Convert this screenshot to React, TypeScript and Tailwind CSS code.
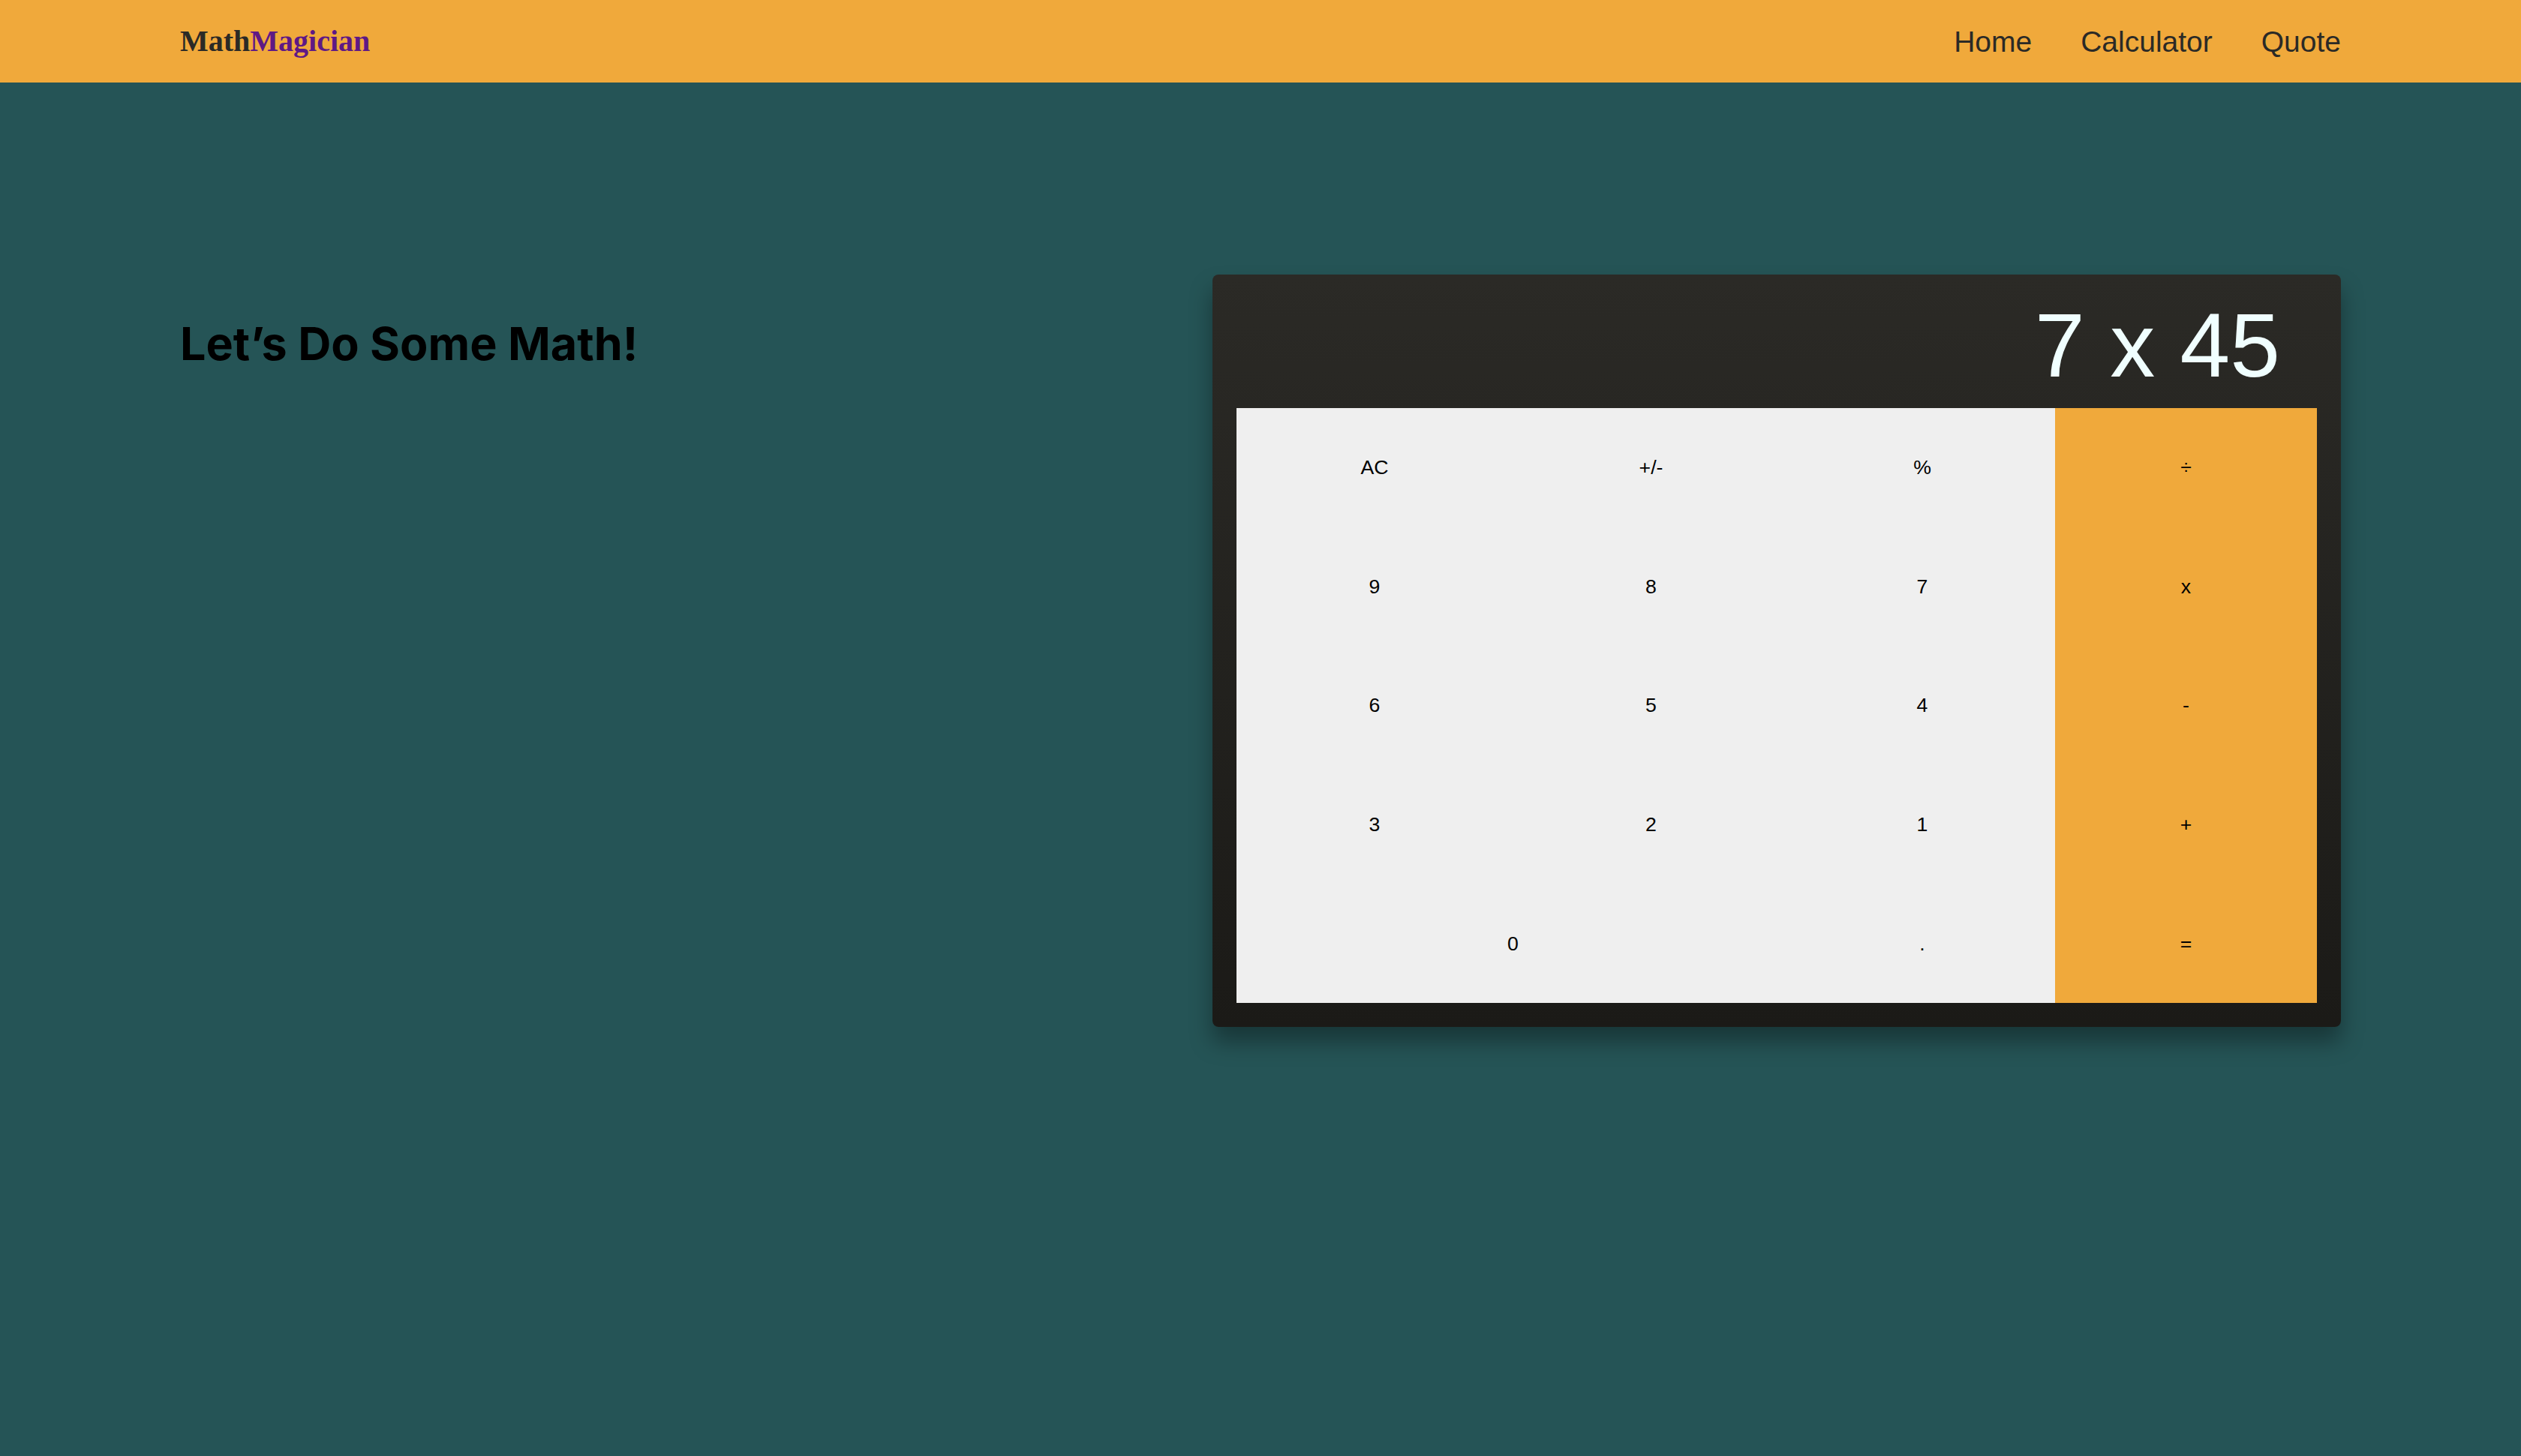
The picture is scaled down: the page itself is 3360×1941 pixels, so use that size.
import React from "react";

const keys: { label: string; orange?: boolean; span?: boolean }[] = [
  { label: "AC" }, { label: "+/-" }, { label: "%" }, { label: "÷", orange: true },
  { label: "9" }, { label: "8" }, { label: "7" }, { label: "x", orange: true },
  { label: "6" }, { label: "5" }, { label: "4" }, { label: "-", orange: true },
  { label: "3" }, { label: "2" }, { label: "1" }, { label: "+", orange: true },
  { label: "0", span: true }, { label: "." }, { label: "=", orange: true },
];

export default function App() {
  return (
    <div className="min-h-[1941px] bg-[#255456]">
      <header className="h-[110px] bg-[#f0a93b] px-[240px] flex items-center justify-between">
        <div className="text-[40px] font-bold leading-none" style={{ fontFamily: '"Liberation Serif", serif' }}>
          <span className="text-[#2b2a26]">Math</span>
          <span className="text-[#5f1985]">Magician</span>
        </div>
        <nav className="flex gap-[65px] text-[39px] leading-none text-[#2b2a26]" style={{ fontFamily: '"Liberation Sans", Arial, sans-serif' }}>
          <a>Home</a>
          <a>Calculator</a>
          <a>Quote</a>
        </nav>
      </header>
      <main className="px-[240px] pt-[256px] flex justify-between items-start">
        <h2 className="mt-[62px] text-[61px] font-bold leading-none text-black" style={{ fontFamily: 'Inter, sans-serif' }}>
          Let’s Do Some Math!
        </h2>
        <div className="w-[1504px] rounded-[8px] p-8 bg-gradient-to-b from-[#2b2a26] to-[#1b1a17] shadow-[0_20px_30px_rgba(0,0,0,0.35)]">
          <div className="h-[146px] pt-[2px] pr-[49px] text-right text-[120px] leading-none text-[#f0ffff]" style={{ fontFamily: '"Liberation Sans", Arial, sans-serif' }}>
            7 x 45
          </div>
          <div className="grid grid-cols-[368px_369px_354px_349px] grid-rows-5 h-[793px] text-[26.67px] text-black" style={{ fontFamily: '"Liberation Sans", Arial, sans-serif' }}>
            {keys.map((k) => (
              <div
                key={k.label}
                className={`flex items-center justify-center ${k.orange ? "bg-[#f0a93b]" : "bg-[#efefef]"} ${k.span ? "col-span-2" : ""}`}
              >
                {k.label}
              </div>
            ))}
          </div>
        </div>
      </main>
    </div>
  );
}
